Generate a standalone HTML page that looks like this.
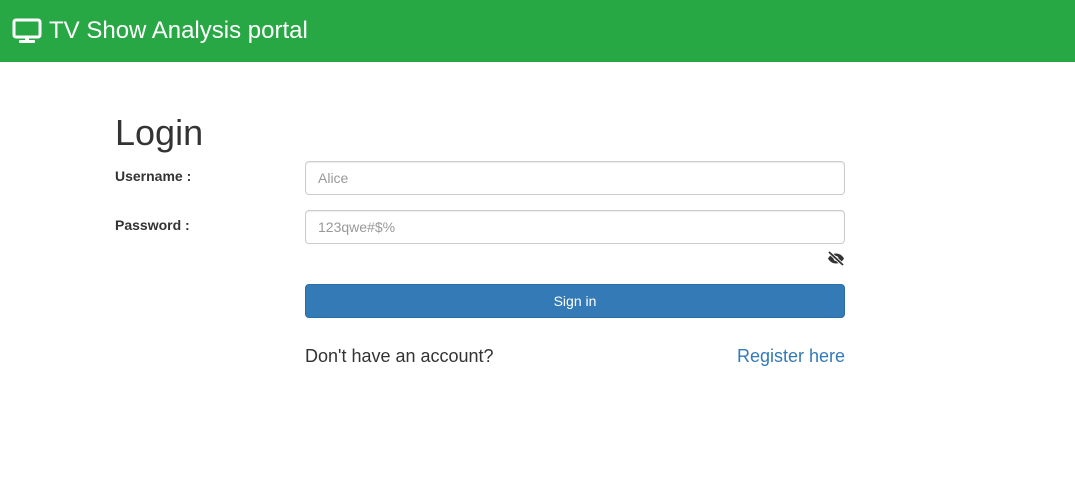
<!DOCTYPE html>
<html><head><meta charset="utf-8"><style>
*{box-sizing:border-box}
body{margin:0;width:1075px;height:488px;background:#fff;font-family:"Liberation Sans",Arial,sans-serif;color:#333;overflow:hidden}
.nav{height:62px;background:#28a745;display:flex;align-items:center;padding-left:12px;color:#fff;font-size:24px}
.nav svg{margin-right:7px}
h1{position:absolute;left:115px;top:112px;margin:0;font-size:36px;font-weight:400;color:#333}
.lbl{position:absolute;left:115px;font-size:14px;font-weight:bold;color:#333}
.inp{position:absolute;left:305px;width:540px;height:34px;border:1px solid #ccc;border-radius:4px;padding:0 12px;font-size:14px;color:#999;line-height:32px;box-shadow:inset 0 1px 1px rgba(0,0,0,.075)}
.btn{position:absolute;left:305px;top:284px;width:540px;height:34px;background:#337ab7;border:1px solid #2e6da4;border-radius:4px;color:#fff;font-size:14px;text-align:center;line-height:32px}
.t{position:absolute;top:346px;font-size:18px}
</style></head><body>
<div class="nav"><svg width="30" height="26" viewBox="0 0 30 26"><rect x="2" y="2" width="26" height="17" rx="2" fill="none" stroke="#fff" stroke-width="3"/><rect x="7" y="22" width="16" height="3" rx="1" fill="#fff"/><rect x="13" y="19" width="4" height="4" fill="#fff"/></svg>TV Show Analysis portal</div>
<h1>Login</h1>
<div class="lbl" style="top:168px">Username :</div>
<div class="inp" style="top:161px">Alice</div>
<div class="lbl" style="top:217px">Password :</div>
<div class="inp" style="top:210px">123qwe#$%</div>
<svg style="position:absolute;left:827px;top:251px" width="18" height="15" viewBox="0 0 18 15"><path d="M1 7.5C3 4 6 2.5 9 2.5S15 4 17 7.5C15 11 12 12.5 9 12.5S3 11 1 7.5Z" fill="#333"/><circle cx="9" cy="7.5" r="2.5" fill="#fff"/><path d="M2 1L16 14" stroke="#fff" stroke-width="3.5"/><path d="M2 1L16 14" stroke="#333" stroke-width="1.8"/></svg>
<div class="btn">Sign in</div>
<div class="t" style="left:305px;color:#333">Don't have an account?</div>
<div class="t" style="left:737px;color:#337ab7">Register here</div>
</body></html>
